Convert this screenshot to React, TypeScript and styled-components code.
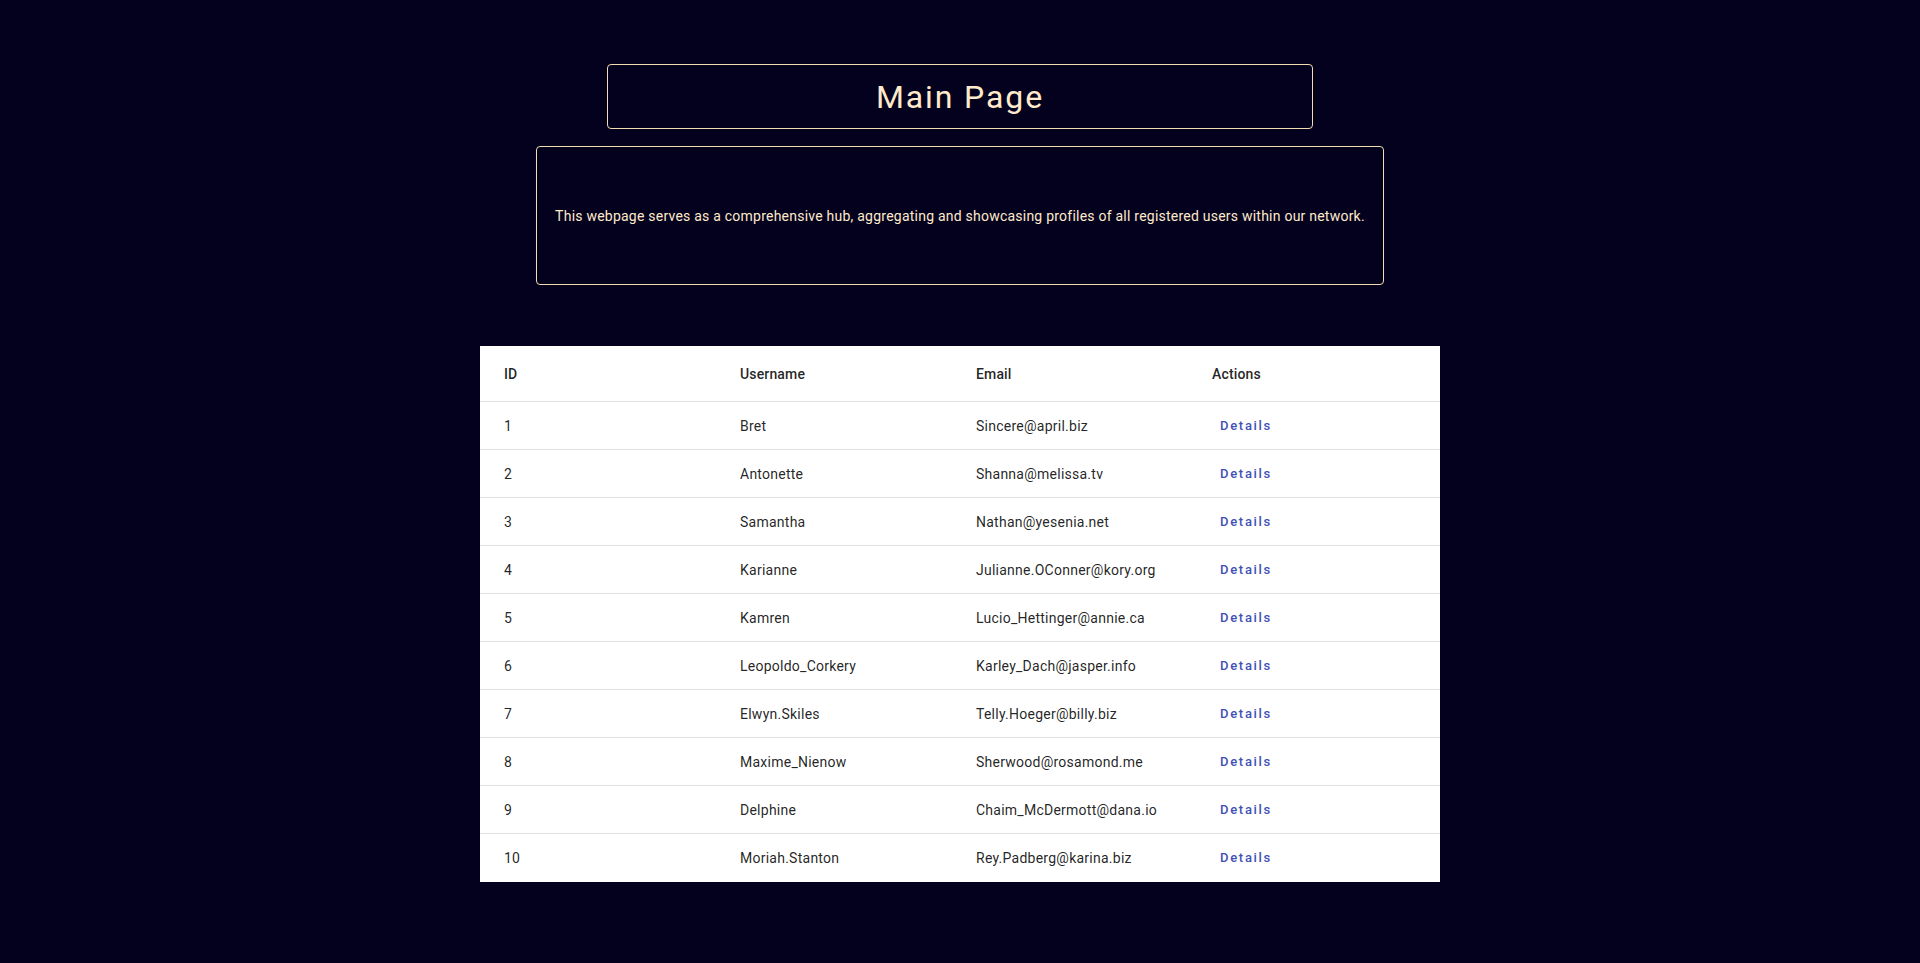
import React from "react";
import styled, { createGlobalStyle } from "styled-components";

const GlobalStyle = createGlobalStyle`
  html, body {
    margin: 0;
    padding: 0;
    background: #03011e;
    font-family: Roboto, "Liberation Sans", Arial, sans-serif;
  }
  * { box-sizing: border-box; }
`;

const Page = styled.main`
  min-height: 963px;
  display: flex;
  flex-direction: column;
  align-items: center;
  padding-top: 64px;
`;

const TitleBox = styled.header`
  width: 706px;
  height: 65px;
  border: 1px solid #f3dcb2;
  border-radius: 4px;
  display: flex;
  align-items: center;
  justify-content: center;
`;

const Title = styled.h1`
  margin: 0;
  font-size: 32px;
  font-weight: 400;
  letter-spacing: 1.9px;
  color: #ffeacb;
  line-height: 1;
`;

const DescBox = styled.section`
  margin-top: 17px;
  height: 139px;
  padding: 0 18px;
  border: 1px solid #f3dcb2;
  border-radius: 4px;
  display: flex;
  align-items: center;
  justify-content: center;
`;

const Desc = styled.p`
  margin: 0;
  font-size: 14px;
  letter-spacing: 0.23px;
  color: #ffeacb;
  white-space: nowrap;
`;

const Table = styled.div`
  margin-top: 61px;
  width: 960px;
  background: #ffffff;
`;

const Row = styled.div<{ $head?: boolean; $last?: boolean }>`
  display: grid;
  grid-template-columns: 236px 236px 236px 1fr;
  align-items: center;
  padding-left: 24px;
  height: ${(p) => (p.$head ? "56px" : "48px")};
  border-bottom: 1px solid ${(p) => (p.$last ? "#ffffff" : "#e0e0e0")};
`;

const Cell = styled.div<{ $head?: boolean }>`
  font-size: 14px;
  font-weight: ${(p) => (p.$head ? 500 : 400)};
  letter-spacing: ${(p) => (p.$head ? "0.15px" : "0.25px")};
  color: rgba(0, 0, 0, 0.87);
`;

const DetailsButton = styled.button`
  justify-self: start;
  background: transparent;
  border: none;
  padding: 5px 8px 3px;
  margin: 0;
  font-family: Roboto, "Liberation Sans", Arial, sans-serif;
  font-size: 13px;
  font-weight: 500;
  letter-spacing: 1.7px;
  color: #3f51b5;
  cursor: pointer;
  border-radius: 4px;
  line-height: 1.75;
`;

const users = [
  { id: 1, username: "Bret", email: "Sincere@april.biz" },
  { id: 2, username: "Antonette", email: "Shanna@melissa.tv" },
  { id: 3, username: "Samantha", email: "Nathan@yesenia.net" },
  { id: 4, username: "Karianne", email: "Julianne.OConner@kory.org" },
  { id: 5, username: "Kamren", email: "Lucio_Hettinger@annie.ca" },
  { id: 6, username: "Leopoldo_Corkery", email: "Karley_Dach@jasper.info" },
  { id: 7, username: "Elwyn.Skiles", email: "Telly.Hoeger@billy.biz" },
  { id: 8, username: "Maxime_Nienow", email: "Sherwood@rosamond.me" },
  { id: 9, username: "Delphine", email: "Chaim_McDermott@dana.io" },
  { id: 10, username: "Moriah.Stanton", email: "Rey.Padberg@karina.biz" },
];

export default function App() {
  return (
    <>
      <GlobalStyle />
      <Page>
        <TitleBox>
          <Title>Main Page</Title>
        </TitleBox>
        <DescBox>
          <Desc>
            This webpage serves as a comprehensive hub, aggregating and showcasing profiles of all registered users within our network.
          </Desc>
        </DescBox>
        <Table>
          <Row $head>
            <Cell $head>ID</Cell>
            <Cell $head>Username</Cell>
            <Cell $head>Email</Cell>
            <Cell $head>Actions</Cell>
          </Row>
          {users.map((u, i) => (
            <Row key={u.id} $last={i === users.length - 1}>
              <Cell>{u.id}</Cell>
              <Cell>{u.username}</Cell>
              <Cell>{u.email}</Cell>
              <DetailsButton>Details</DetailsButton>
            </Row>
          ))}
        </Table>
      </Page>
    </>
  );
}
